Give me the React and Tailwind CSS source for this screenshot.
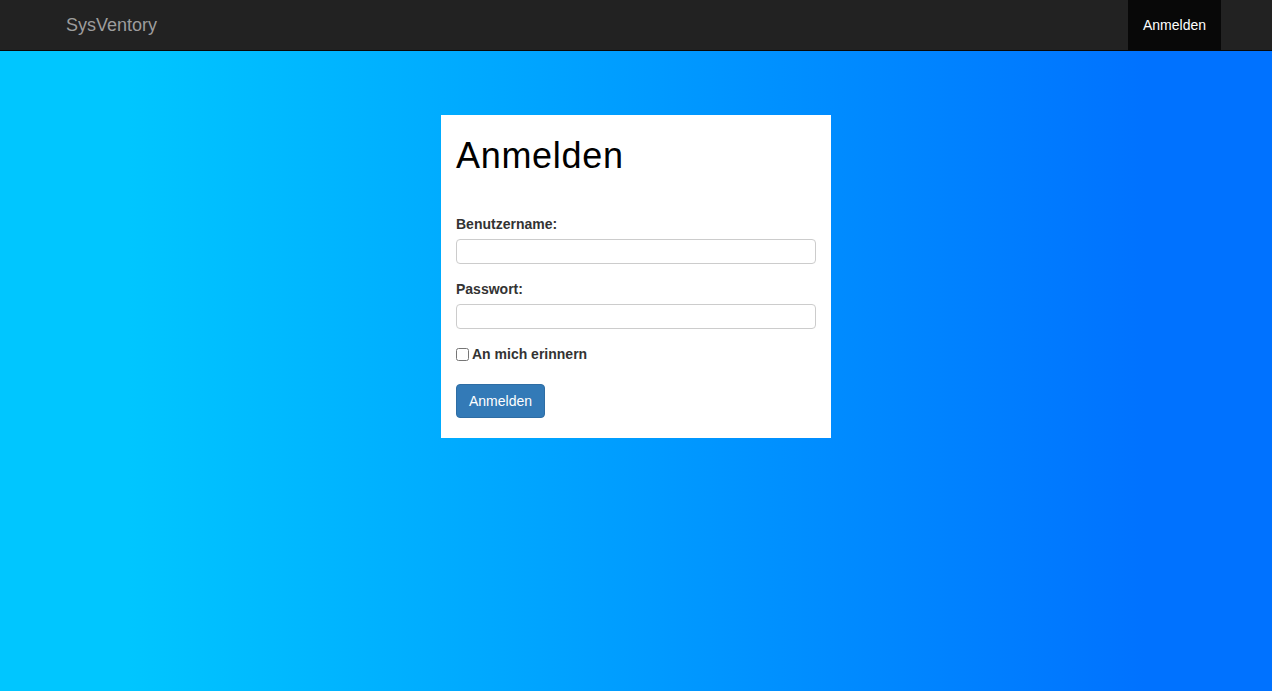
import React, { useState } from 'react';

const App = () => {
  const [form, setForm] = useState({ username: '', password: '', remember: false });

  const handleChange = (e) => {
    const { name, value, type, checked } = e.target;
    setForm({ ...form, [name]: type === 'checkbox' ? checked : value });
  };

  return (
    <div className="min-h-screen flex flex-col font-['Liberation_Sans',Arial,sans-serif] text-[14px] text-[#333]">
      {/* Navbar */}
      <nav className="h-[51px] shrink-0 bg-[#222] border-b border-[#080808]">
        <div className="w-[1170px] mx-auto px-[15px] flex items-stretch justify-between h-[50px]">
          <a href="#" className="flex items-center text-[18px] text-[#9d9d9d] leading-[20px]">
            SysVentory
          </a>
          <a href="#" className="flex items-center px-[15px] -mr-[15px] bg-[#080808] text-white leading-[20px]">
            Anmelden
          </a>
        </div>
      </nav>

      {/* Main */}
      <main className="flex-1 bg-[linear-gradient(to_right,#00c6ff_10%,#0072ff_90%)] flex justify-center pt-[64px]">
        <div className="self-start w-[390px] bg-white px-[15px] pt-[21px] pb-[20px]">
          <h1 className="text-[36px] leading-[1.1] font-normal tracking-[0.7px] text-black mb-[38px]">Anmelden</h1>

          <form onSubmit={(e) => e.preventDefault()} className="flex flex-col">
            <div className="mb-[15px]">
              <label className="block font-bold leading-[20px] mb-[5px]">Benutzername:</label>
              <input
                type="text"
                name="username"
                value={form.username}
                onChange={handleChange}
                className="block w-full h-[25px] border border-[#ccc] rounded-[4px] px-[6px] outline-none"
              />
            </div>
            <div className="mb-[15px]">
              <label className="block font-bold leading-[20px] mb-[5px]">Passwort:</label>
              <input
                type="password"
                name="password"
                value={form.password}
                onChange={handleChange}
                className="block w-full h-[25px] border border-[#ccc] rounded-[4px] px-[6px] outline-none"
              />
            </div>
            <label className="flex items-center font-bold leading-[20px] mb-[20px]">
              <input
                type="checkbox"
                name="remember"
                checked={form.remember}
                onChange={handleChange}
                className="w-[13px] h-[13px] m-0 mr-[3px] mt-[1px]"
              />
              An mich erinnern
            </label>
            <div>
              <button
                type="submit"
                className="h-[34px] px-[12px] bg-[#337ab7] border border-[#2e6da4] rounded-[4px] text-white leading-[20px]"
              >
                Anmelden
              </button>
            </div>
          </form>
        </div>
      </main>
    </div>
  );
};

export default App;
